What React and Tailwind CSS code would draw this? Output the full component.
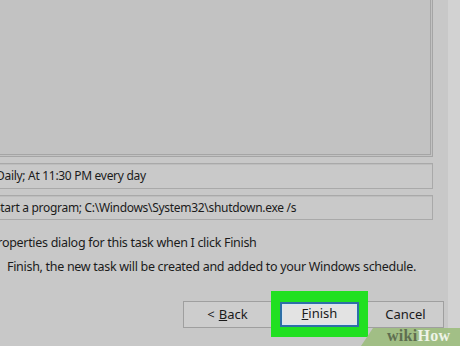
import React from 'react'

const font = { fontFamily: '"Segoe UI", "Noto Sans", "Liberation Sans", sans-serif' }

function Field({ children, className = '' }) {
  return (
    <div className={`-ml-[2px] w-[435px] border border-[#a9a9a9] shadow-[inset_1px_1px_0_#bdbdbd] bg-[#c9c9c9] flex items-center overflow-hidden whitespace-nowrap ${className}`}>
      {children}
    </div>
  )
}

function WinButton({ children, className = '' }) {
  return (
    <div className={`h-[27px] border border-[#9f9f9f] bg-[#cdcdcd] flex items-center justify-center text-[13px] text-[#1a1a1a] ${className}`}>
      {children}
    </div>
  )
}

export default function App() {
  return (
    <div className="relative w-[460px] h-[346px] overflow-hidden bg-[#d0d0d0] flex" style={font}>
      {/* dialog area */}
      <div className="w-[448px] h-full bg-[#c8c8c8] flex flex-col">
        {/* big list panel */}
        <div className="-ml-[2px] w-[435px] h-[157px] bg-[#c2c2c2] border-r-[3px] border-b-[3px] border-double border-[#a5a5a5]" />

        <Field className="mt-[6px] h-[26px]">
          <span className="-ml-[3px] text-[12px] tracking-[-0.3px] text-[#1b1b1b]">Daily; At 11:30 PM every day</span>
        </Field>
        <Field className="mt-[6px] h-[25px]">
          <span className="-ml-[5px] text-[12px] tracking-[-0.3px] text-[#1b1b1b]">Start a program; C:\Windows\System32\shutdown.exe /s</span>
        </Field>

        <div className="mt-[13px] h-[20px] flex items-center whitespace-nowrap overflow-hidden">
          <span className="-ml-[10px] text-[12.5px] tracking-[-0.3px] text-[#1b1b1b]">Properties dialog for this task when I click Finish</span>
        </div>
        <div className="mt-[4px] h-[20px] flex items-center whitespace-nowrap overflow-hidden">
          <span className="ml-[7px] text-[12.5px] tracking-[-0.3px] text-[#1b1b1b]">Finish, the new task will be created and added to your Windows schedule.</span>
        </div>

        {/* buttons */}
        <div className="mt-[14px] flex items-start">
          <WinButton className="ml-[183px] mt-[10px] w-[89px] -mr-[1px]">
            &lt; <u className="ml-[4px]">B</u>ack
          </WinButton>
          <div className="w-[97px] h-[46px] bg-[#21e021] flex items-center justify-center relative">
            <div className="w-[79px] h-[25px] border-2 border-[#2e6fa6] bg-[#e3e3e3] shadow-[inset_0_0_0_1px_#d8e6f2] flex items-center justify-center text-[13px] text-[#1a1a1a]">
              <u>F</u>inish
            </div>
          </div>
          <WinButton className="mt-[10px] w-[77px] -ml-[1px]">Cancel</WinButton>
        </div>
      </div>
      {/* right edge strip */}
      <div className="flex-1 h-full bg-[#d2d2d2]" />

      {/* wikiHow watermark */}
      <div className="absolute left-0 bottom-0 w-[460px] h-[20px] pointer-events-none">
        <svg width="460" height="20" className="absolute left-0 top-0">
          <polygon points="373,2 460,2 460,20 361,20" fill="#9dbd7f" fillOpacity="0.92" />
        </svg>
        <div className="absolute left-[387px] top-[1px] text-[16px] font-bold leading-[18px] tracking-[0.3px]" style={{ fontFamily: '"Liberation Serif", "DejaVu Serif", serif' }}>
          <span className="text-[#5f6e50]">wiki</span><span className="text-[#eef4e7]">How</span>
        </div>
      </div>
    </div>
  )
}
